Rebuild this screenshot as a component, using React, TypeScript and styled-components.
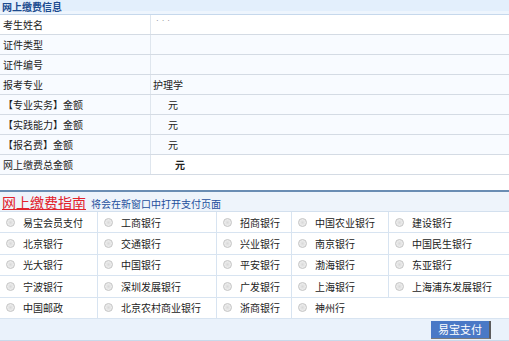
import React from "react";
import styled, { createGlobalStyle } from "styled-components";

const Global = createGlobalStyle`
  html, body { margin: 0; padding: 0; background: #ffffff; }
  body { font-family: "Noto Sans CJK SC", "Liberation Sans", sans-serif; font-size: 10px; color: #222; }
`;

const Page = styled.div`
  width: 509px;
  display: flex;
  flex-direction: column;
`;

const InfoHeader = styled.div`
  height: 14px;
  background: #e3effc;
  border-bottom: 1px solid #c6d8ec;
  box-shadow: inset 0 -3px 0 #eef5fd;
  display: flex;
  align-items: center;
  padding-left: 2px;
  font-size: 10px;
  line-height: 14px;
  font-weight: bold;
  color: #1c4b8f;
`;

const InfoRow = styled.div<{ $white?: boolean }>`
  display: grid;
  grid-template-columns: 151px 1fr;
  height: 20px;
  box-sizing: border-box;
  border-bottom: 1px solid #d4dbe4;
  background: ${(p) => (p.$white ? "#ffffff" : "#f8fbff")};
`;

const Label = styled.div`
  display: flex;
  align-items: center;
  padding-left: 3px;
  border-right: 1px solid #dfe6ee;
  line-height: 19px;
  color: #222;
`;

const Value = styled.div<{ $indent?: number; $bold?: boolean; $white?: boolean; $top?: boolean }>`
  display: flex;
  align-items: ${(p) => (p.$top ? "flex-start" : "center")};
  padding-left: ${(p) => p.$indent ?? 2}px;
  font-weight: ${(p) => (p.$bold ? "bold" : "normal")};
  background: ${(p) => (p.$white ? "#ffffff" : "transparent")};
  line-height: 19px;
`;

const Masked = styled.span`
  font-family: "Liberation Sans", sans-serif;
  font-size: 8px;
  line-height: 8px;
  color: #777;
  letter-spacing: 3px;
  margin-top: 2px;
`;

const Spacer = styled.div`
  height: 15px;
`;

const Guide = styled.div`
  border-top: 2px solid #6a8db3;
  background: #eef4fb;
  display: flex;
  flex-direction: column;
`;

const GuideHeader = styled.div`
  height: 19px;
  display: flex;
  align-items: flex-end;
  gap: 5px;
  padding-left: 2px;
  border-bottom: 1px solid #d3e0ee;
`;

const GuideTitle = styled.span`
  font-size: 14px;
  line-height: 17px;
  color: #e2222c;
  text-decoration: underline;
  text-underline-offset: 1px;
`;

const GuideNote = styled.span`
  font-size: 10px;
  line-height: 15px;
  color: #1d4f9d;
`;

const BankGrid = styled.div`
  display: grid;
  grid-template-columns: 98px 119px 75px 97px 1fr;
  grid-auto-rows: 21.4px;
  background: #ffffff;
`;

const BankCell = styled.label<{ $noRight?: boolean }>`
  display: flex;
  align-items: center;
  gap: 8px;
  padding-left: 6px;
  box-sizing: border-box;
  border-bottom: 1px solid #d8e4f1;
  border-right: ${(p) => (p.$noRight ? "none" : "1px solid #d8e4f1")};
  color: #222;
  white-space: nowrap;
`;

const Radio = styled.span`
  width: 9px;
  height: 9px;
  flex: 0 0 9px;
  border-radius: 50%;
  box-sizing: border-box;
  border: 1px solid #c4c4c4;
  background: radial-gradient(circle at 50% 50%, #d8d8d8 0, #e6e6e6 40%, #f4f4f4 100%);
`;

const Footer = styled.div`
  height: 21px;
  display: flex;
  justify-content: flex-end;
  align-items: center;
  padding-right: 18px;
  background: #eaf2fb;
  border-bottom: 1px solid #c9d9ea;
`;

const PayButton = styled.button`
  width: 60px;
  height: 18px;
  padding: 0;
  margin-top: 1px;
  border: none;
  border-right: 2px solid #5c5c5c;
  border-bottom: 1px solid #7a7a7a;
  background: #4a79c6;
  color: #ffffff;
  font-family: "Noto Sans CJK SC", "Liberation Sans", sans-serif;
  font-size: 11px;
  line-height: 17px;
  cursor: pointer;
`;

const banks: string[][] = [
  ["易宝会员支付", "工商银行", "招商银行", "中国农业银行", "建设银行"],
  ["北京银行", "交通银行", "兴业银行", "南京银行", "中国民生银行"],
  ["光大银行", "中国银行", "平安银行", "渤海银行", "东亚银行"],
  ["宁波银行", "深圳发展银行", "广发银行", "上海银行", "上海浦东发展银行"],
  ["中国邮政", "北京农村商业银行", "浙商银行", "神州行", ""],
];

export default function App() {
  return (
    <Page>
      <Global />
      <InfoHeader>网上缴费信息</InfoHeader>
      <InfoRow $white>
        <Label>考生姓名</Label>
        <Value $indent={5} $top>
          <Masked>···</Masked>
        </Value>
      </InfoRow>
      <InfoRow>
        <Label>证件类型</Label>
        <Value />
      </InfoRow>
      <InfoRow>
        <Label>证件编号</Label>
        <Value />
      </InfoRow>
      <InfoRow>
        <Label>报考专业</Label>
        <Value>护理学</Value>
      </InfoRow>
      <InfoRow>
        <Label>【专业实务】金额</Label>
        <Value $indent={17}>元</Value>
      </InfoRow>
      <InfoRow>
        <Label>【实践能力】金额</Label>
        <Value $indent={17}>元</Value>
      </InfoRow>
      <InfoRow>
        <Label>【报名费】金额</Label>
        <Value $indent={17}>元</Value>
      </InfoRow>
      <InfoRow>
        <Label>网上缴费总金额</Label>
        <Value $indent={24} $bold $white>
          元
        </Value>
      </InfoRow>
      <Spacer />
      <Guide>
        <GuideHeader>
          <GuideTitle>网上缴费指南</GuideTitle>
          <GuideNote>将会在新窗口中打开支付页面</GuideNote>
        </GuideHeader>
        <BankGrid>
          {banks.map((row, r) =>
            row.map((name, c) => (
              <BankCell key={`${r}-${c}`} $noRight={c === 4 || (r === 4 && c === 3)}>
                {name ? (
                  <>
                    <Radio />
                    {name}
                  </>
                ) : null}
              </BankCell>
            ))
          )}
        </BankGrid>
        <Footer>
          <PayButton>易宝支付</PayButton>
        </Footer>
      </Guide>
    </Page>
  );
}
